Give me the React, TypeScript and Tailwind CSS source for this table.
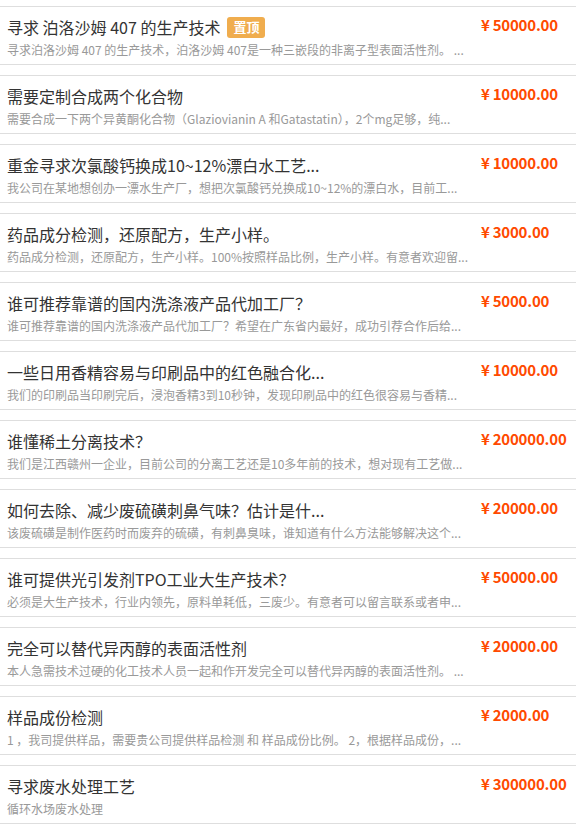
import React from 'react';

type Demand = {
  title: string;
  desc: string;
  price: string;
  top?: boolean;
};

const demands: Demand[] = [
  {
    title: '寻求 泊洛沙姆 407 的生产技术',
    desc: '寻求泊洛沙姆 407 的生产技术，泊洛沙姆 407是一种三嵌段的非离子型表面活性剂。 ...',
    price: '50000.00',
    top: true,
  },
  {
    title: '需要定制合成两个化合物',
    desc: '需要合成一下两个异黄酮化合物（Glaziovianin A 和Gatastatin），2个mg足够，纯...',
    price: '10000.00',
  },
  {
    title: '重金寻求次氯酸钙换成10~12%漂白水工艺...',
    desc: '我公司在某地想创办一漂水生产厂，想把次氯酸钙兑换成10~12%的漂白水，目前工...',
    price: '10000.00',
  },
  {
    title: '药品成分检测，还原配方，生产小样。',
    desc: '药品成分检测，还原配方，生产小样。100%按照样品比例，生产小样。有意者欢迎留...',
    price: '3000.00',
  },
  {
    title: '谁可推荐靠谱的国内洗涤液产品代加工厂？',
    desc: '谁可推荐靠谱的国内洗涤液产品代加工厂？希望在广东省内最好，成功引荐合作后给...',
    price: '5000.00',
  },
  {
    title: '一些日用香精容易与印刷品中的红色融合化...',
    desc: '我们的印刷品当印刷完后，浸泡香精3到10秒钟，发现印刷品中的红色很容易与香精...',
    price: '10000.00',
  },
  {
    title: '谁懂稀土分离技术？',
    desc: '我们是江西赣州一企业，目前公司的分离工艺还是10多年前的技术，想对现有工艺做...',
    price: '200000.00',
  },
  {
    title: '如何去除、减少废硫磺刺鼻气味？估计是什...',
    desc: '该废硫磺是制作医药时而废弃的硫磺，有刺鼻臭味，谁知道有什么方法能够解决这个...',
    price: '20000.00',
  },
  {
    title: '谁可提供光引发剂TPO工业大生产技术？',
    desc: '必须是大生产技术，行业内领先，原料单耗低，三废少。有意者可以留言联系或者申...',
    price: '50000.00',
  },
  {
    title: '完全可以替代异丙醇的表面活性剂',
    desc: '本人急需技术过硬的化工技术人员一起和作开发完全可以替代异丙醇的表面活性剂。 ...',
    price: '20000.00',
  },
  {
    title: '样品成份检测',
    desc: '1 ，我司提供样品，需要贵公司提供样品检测 和 样品成份比例。 2，根据样品成份，...',
    price: '2000.00',
  },
  {
    title: '寻求废水处理工艺',
    desc: '循环水场废水处理',
    price: '300000.00',
  },
];

export default function App() {
  return (
    <div className="w-[576px] bg-white pt-[6px] font-['Noto_Sans_CJK_SC','Microsoft_YaHei',sans-serif]">
      {demands.map((d, i) => (
        <div
          key={i}
          className="mb-[10px] flex h-[59px] border-y border-[#dedede] bg-white"
        >
          <div className="min-w-0 flex-1 pl-[7px] pt-[9px]">
            <div className="flex h-[22px] items-center whitespace-nowrap text-[16px] leading-[22px] text-[#333]">
              <span className="overflow-hidden">{d.title}</span>
              {d.top && (
                <span className="ml-[7px] flex h-[21px] w-[38px] items-center justify-center rounded-[3px] bg-[#f0ad4e] text-[13px] font-bold text-white">
                  置顶
                </span>
              )}
            </div>
            <div className="mt-[3px] overflow-hidden whitespace-nowrap text-[12px] leading-[18px] text-[#999]">
              {d.desc}
            </div>
          </div>
          <div className="w-[95px] shrink-0 whitespace-nowrap pt-[7px] text-[15px] font-bold leading-[22px] tracking-[-0.2px] text-[#ff4a00]">
            <span className="mr-[3px]">¥</span>
            {d.price}
          </div>
        </div>
      ))}
    </div>
  );
}
